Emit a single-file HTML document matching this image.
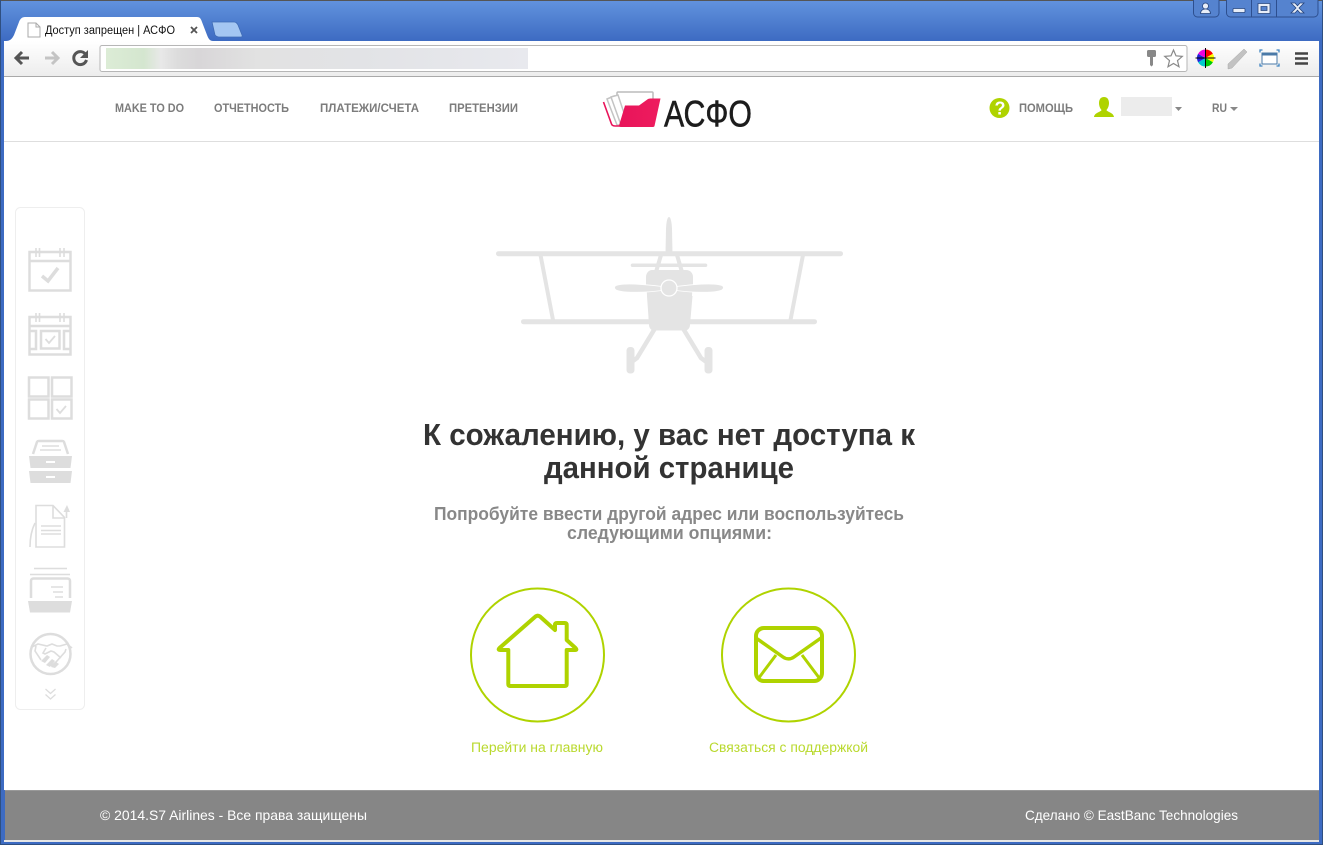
<!DOCTYPE html>
<html lang="ru">
<head>
<meta charset="utf-8">
<title>Доступ запрещен | АСФО</title>
<style>
html,body{margin:0;padding:0;background:#fff;width:1323px;height:845px;overflow:hidden}
svg{display:block;position:absolute;left:0;top:0}
text{font-family:"Liberation Sans","DejaVu Sans",sans-serif}
.nav{font-size:12px;font-weight:bold;fill:#7c7c7c}
.ic{fill:none;stroke:#ddd;stroke-width:2.5}
.ict{fill:none;stroke:#ddd;stroke-width:1.6}
.p{fill:#e4e4e4}
.ps{stroke:#e4e4e4;fill:none;stroke-linecap:round}
</style>
</head>
<body>
<svg width="1323" height="845" viewBox="0 0 1323 845">
<defs>
<linearGradient id="fr" x1="0" y1="0" x2="0" y2="1"><stop offset="0" stop-color="#6293de"/><stop offset="1" stop-color="#3d6bc2"/></linearGradient>
<linearGradient id="tb" x1="0" y1="0" x2="0" y2="1"><stop offset="0" stop-color="#fff"/><stop offset="1" stop-color="#ececec"/></linearGradient>
<linearGradient id="pk" x1="0" y1="0" x2="1" y2="0"><stop offset="0" stop-color="#e8145a"/><stop offset="1" stop-color="#ee1c5e"/></linearGradient>
<linearGradient id="bl" x1="0" y1="0" x2="1" y2="0"><stop offset="0" stop-color="#dcecd6"/><stop offset=".09" stop-color="#d4e6cf"/><stop offset=".13" stop-color="#e8e8e8"/><stop offset=".17" stop-color="#dcdcdc"/><stop offset=".22" stop-color="#d8d6d8"/><stop offset=".36" stop-color="#e2e2e2"/><stop offset=".6" stop-color="#e2e3e6"/><stop offset="1" stop-color="#e8e9ee"/></linearGradient>
</defs>

<!-- window frame -->
<rect width="1323" height="845" fill="#3d6bc2"/>
<rect width="1323" height="41" fill="url(#fr)"/>
<rect width="1323" height="1" fill="#555"/>
<rect x="0" y="0" width="1" height="845" fill="#2f4f80"/>
<rect x="1322" y="0" width="1" height="845" fill="#2f4f80"/>
<rect x="0" y="844" width="1323" height="1" fill="#2f4f80"/>

<!-- window buttons -->
<g fill="none" stroke="#2d4f8f" stroke-width="1">
<path d="M1193.500 0V13a4 4 0 0 0 4 4H1215a4 4 0 0 0 4-4V0" fill="#5583cf"/>
<path d="M1226.500 0V13a4 4 0 0 0 4 4H1314a4 4 0 0 0 4-4V0" fill="#5583cf"/>
<path d="M1251.500 0V17M1276.500 0V17"/>
</g>
<g fill="#e8eef8" stroke="#27457d" stroke-width=".8">
<circle cx="1205.500" cy="6" r="3"/>
<path d="M1200.500 13.500c0-3 2.500-4.500 5-4.500s5 1.500 5 4.500z"/>
<rect x="1233" y="8.500" width="12" height="4" rx="1"/>
<path fill-rule="evenodd" d="M1258 3.500h12v10h-12zM1261 6.500v4h6v-4z"/>
</g>
<path d="M1291 3l5 5-5 5h4l2.500-2.800 2.500 2.800h4l-5-5 5-5h-4l-2.500 2.800-2.500-2.800z" fill="#e8eef8" stroke="#27457d" stroke-width=".8"/>

<!-- inactive tab -->
<path d="M212 22h22c2 0 3 1 4 3l4 10c.5 1.500 0 2-1 2h-22c-2 0-3-1-4-2z" fill="#a4c6f2" stroke="#3f6bb5" stroke-width=".8"/>

<!-- toolbar -->
<rect x="4" y="41" width="1315" height="36" fill="url(#tb)"/>
<rect x="4" y="76" width="1315" height="1" fill="#a9a9a9"/>

<!-- active tab -->
<path d="M4 41h2c4 0 6-2 8-6l5-13c1-3 3-5 6-5h172c3 0 4 2 5 5l5 13c1.500 4 3 6 6 6z" fill="#fff"/>
<path d="M28 23h8l4 4v10H28z" fill="#fff" stroke="#aaa" stroke-width="1"/>
<path d="M36 23v4h4" fill="none" stroke="#aaa"/>
<text x="45" y="34" font-size="11.500" fill="#111" textLength="130" lengthAdjust="spacingAndGlyphs">Доступ запрещен | АСФО</text>
<path d="M191 27l6 6M197 27l-6 6" stroke="#555" stroke-width="1.800"/>

<!-- nav buttons -->
<g fill="none" stroke-width="3">
<path d="M16 58h13" stroke="#555"/><path d="M22 52L16 58l6 6" stroke="#555"/>
<path d="M45 58h13" stroke="#c4c4c4"/><path d="M52 52L58 58l-6 6" stroke="#c4c4c4"/>
<path d="M86 55a6.500 6.500 0 1 0 .5 5" stroke="#555"/>
</g>
<path d="M88 50v8h-8z" fill="#555"/>

<!-- omnibox -->
<rect x="100" y="45.500" width="1087" height="26" rx="2" fill="#fff" stroke="#b6b6b6"/>
<rect x="106" y="48" width="422" height="21" fill="url(#bl)"/>

<!-- key + star -->
<path d="M1148.500 50h6c1 0 1.500.5 1.500 1.500v4c0 1-.5 1.500-1.500 1.500h-1.500v8l-1.500 1.500-1.500-1.500v-8h-1.500c-1 0-1.500-.5-1.500-1.500v-4c0-1 .5-1.500 1.500-1.500z" fill="#888"/>
<path d="M1173.500 50l2.500 5.800 6.300.6-4.800 4.200 1.500 6.200-5.500-3.300-5.500 3.300 1.500-6.200-4.800-4.200 6.300-.6z" fill="#fff" stroke="#8a8a8a" stroke-width="1.200"/>

<!-- color wheel -->
<g transform="translate(1205.500 58)">
<path d="M0 0V-8.500A8.500 8.500 0 0 1 7.400-4.200z" fill="#f00"/>
<path d="M0 0L7.400-4.200A8.500 8.500 0 0 1 7.400 4.200z" fill="#ff0"/>
<path d="M0 0L7.400 4.200A8.500 8.500 0 0 1 0 8.500z" fill="#0c0"/>
<path d="M0 0V8.500A8.500 8.500 0 0 1-7.400 4.200z" fill="#0cc"/>
<path d="M0 0L-7.400 4.200A8.500 8.500 0 0 1-7.400-4.200z" fill="#22d"/>
<path d="M0 0L-7.400-4.200A8.500 8.500 0 0 1 0-8.500z" fill="#e0d"/>
<path d="M0-10V10M-10 0H10" stroke="#000" stroke-width="1"/>
</g>
<path d="M1228 64l16-15 3 3-15 16-4 1z" fill="#c2c2c2" stroke="#aaa" stroke-width=".5"/>
<!-- window icon -->
<rect x="1262" y="53" width="15" height="11" fill="#fff" stroke="#4a7aa8" stroke-width="1"/>
<rect x="1262" y="53" width="15" height="2.500" fill="#4a7aa8"/>
<path d="M1260 52.500v-2.500h2.500M1276.500 50h2.500v2.500M1279 63.500v2.500h-2.500M1262.500 66H1260v-2.500" fill="none" stroke="#3f84c0" stroke-width="1.300"/>
<!-- menu -->
<path d="M1295 53.500h13M1295 58.500h13M1295 63.500h13" stroke="#444" stroke-width="2.500"/>

<!-- page -->
<rect x="4" y="77" width="1315" height="713" fill="#fff"/>
<rect x="4" y="141" width="1315" height="1" fill="#dedede"/>

<!-- header nav -->
<text class="nav" x="115" y="112" textLength="69" lengthAdjust="spacingAndGlyphs">MAKE TO DO</text>
<text class="nav" x="214" y="112" textLength="75" lengthAdjust="spacingAndGlyphs">ОТЧЕТНОСТЬ</text>
<text class="nav" x="320" y="112" textLength="99" lengthAdjust="spacingAndGlyphs">ПЛАТЕЖИ/СЧЕТА</text>
<text class="nav" x="449" y="112" textLength="69" lengthAdjust="spacingAndGlyphs">ПРЕТЕНЗИИ</text>

<!-- logo -->
<path d="M617 98v-5c0-.8.5-1 1-1h34c.5 0 1 .2 1 1v6" fill="none" stroke="#bbb" stroke-width="1.500"/>
<path d="M607 99l7-3 9 29h-6z" fill="#fff" stroke="#c4c4c4" stroke-width="1.500"/>
<path d="M611 97l7-2 10 30h-7z" fill="#fff" stroke="#c4c4c4" stroke-width="1.500"/>
<path d="M603.500 102l8 22c.5 1.500 2 2 4 2h5" fill="none" stroke="#e8145a" stroke-width="1.600"/>
<path d="M625 105.500h14l9-6.500c1-.5 2-.5 3-.5h9.500l-6 27.500c-.2.800-1 1-2 1h-31.500c-1.500 0-2-.5-2-1.500z" fill="url(#pk)"/>
<text x="664" y="126.500" font-size="37" fill="#1c1c1c" stroke="#1c1c1c" stroke-width=".5" textLength="88" lengthAdjust="spacingAndGlyphs">АСФО</text>

<!-- help -->
<circle cx="999.500" cy="108" r="10" fill="#afd300"/>
<text x="994.500" y="114.500" font-size="18" font-weight="bold" fill="#fff">?</text>
<text class="nav" x="1019" y="112" textLength="54" lengthAdjust="spacingAndGlyphs">ПОМОЩЬ</text>
<path d="M1104 97c3.500 0 5 2.800 5 6 0 3-1.200 5.500-2.500 7 .5 2 7 2.500 7.500 7h-20c.5-4.500 7-5 7.500-7-1.300-1.500-2.500-4-2.500-7 0-3.200 1.500-6 5-6z" fill="#afd300"/>
<rect x="1121" y="97" width="51" height="19" fill="#ececec"/>
<path d="M1175 107h7l-3.500 4z" fill="#888"/>
<text class="nav" x="1212" y="112" textLength="15" lengthAdjust="spacingAndGlyphs">RU</text>
<path d="M1230 107h8l-4 4z" fill="#888"/>

<!-- sidebar -->
<rect x="15.500" y="207.500" width="69" height="502" rx="5" fill="#fff" stroke="#eee"/>
<!-- 1 -->
<rect x="29.500" y="252" width="41" height="38.500" class="ic"/>
<path d="M29 261h42" class="ic"/>
<path d="M36 248v9M39.500 248v9M60 248v9M64 248v9" class="ict"/>
<path d="M42 276l6 5 10-13" fill="none" stroke="#ddd" stroke-width="3.500"/>
<!-- 2 -->
<rect x="29.500" y="317" width="41" height="37.500" class="ic"/>
<path d="M29 326h42" class="ic"/>
<path d="M36 313v9M39.500 313v9M60 313v9M64 313v9" class="ict"/>
<path d="M29 331h7v18h-7M71 331h-7v18h7" class="ic"/>
<rect x="41" y="331" width="18.500" height="17.500" class="ic"/>
<path d="M45.500 339l3.500 4 6-7" fill="none" stroke="#ddd" stroke-width="1.800"/>
<!-- 3 -->
<rect x="29" y="377.500" width="19.500" height="19" class="ic"/>
<rect x="52" y="377.500" width="19.500" height="19" class="ic"/>
<rect x="29" y="399.500" width="19.500" height="19" class="ic"/>
<rect x="52" y="399.500" width="19.500" height="19" class="ic"/>
<path d="M56.500 409l3.500 4 6-7" fill="none" stroke="#ddd" stroke-width="1.800"/>
<!-- 4 -->
<path d="M33 454l4-12c.5-1 1-1 2-1h23c1 0 1.500 0 2 1l4 12" class="ic" stroke-width="2"/>
<path d="M42 446h17M40 450h21" class="ict"/>
<path d="M29 456h43l-1.500 12h-40z" fill="#ddd"/>
<path d="M29 471h43l-1.500 12h-40z" fill="#ddd"/>
<rect x="46" y="461" width="9" height="2" fill="#fff"/>
<rect x="46" y="476" width="9" height="2" fill="#fff"/>
<!-- 5 -->
<path d="M36 505.500h17l11.500 12v29.500H36z" class="ict" stroke-width="2"/>
<path d="M53 505.500V518h11.500" class="ict" stroke-width="2"/>
<path d="M41 526h20M41 530.500h20M41 534h20" class="ict"/>
<path d="M30 547c0-10 2-18 5-24" class="ict" stroke-width="2"/>
<path d="M66.500 518v-8" class="ict" stroke-width="2"/>
<path d="M63.500 512l3.500-7 3 7z" fill="#ddd"/>
<!-- 6 -->
<path d="M34 568.500h33M30 574.500h40" class="ict" stroke-width="2"/>
<path d="M31 598v-17c0-1.500 1-2.500 2.500-2.500h34c1.500 0 2.500 1 2.500 2.500v17" class="ic" stroke-width="2"/>
<path d="M51 587h12M53 592h10M55 597h8" class="ict" stroke-width="1.800"/>
<path d="M28 601h44l-2 11.500H30z" fill="#ddd"/>
<!-- 7 -->
<circle cx="50.500" cy="654" r="20" class="ic"/>
<path d="M32 647l6-3 9 2 5-2 5 2h3l7-2 5 4M36 646l-1 5 6 9M66 649l-1 3-9 10-5 4M46 648l-3 5 2 1 6-3 3 1 7 6" class="ict"/>
<path d="M41 661l6-6 3 2-5 6zM46 665l6-6 3 2-5 6zM51 667l5-5 3 2-4 4z" fill="#ddd"/>
<!-- chevrons -->
<path d="M45.500 689l5 4.500 5-4.500M45.500 694.500l5 4.500 5-4.500" fill="none" stroke="#ddd" stroke-width="1.300"/>

<!-- plane -->
<g>
<path d="M669 217c1.800 0 2.800 6 3 12l.5 25h-7l.5-25c.2-6 1.200-12 3-12z" class="p"/>
<path d="M498.500 253.700H840.500" class="ps" stroke-width="5"/>
<path d="M523.500 321.700H814.500" class="ps" stroke-width="5"/>
<path d="M540.500 255L553 320M803 255L790.500 320" class="ps" stroke-width="4" stroke-linecap="butt"/>
<path d="M632.500 265.300H705.500" class="ps" stroke-width="3.500"/>
<path d="M661 255L656 272M677 255L682 272" class="ps" stroke-width="4" stroke-linecap="butt"/>
<path d="M652 270h34c4 0 7 3 7 7v8h-47v-8c0-4 3-7 6-7z" class="p"/>
<path d="M646.500 284h46l-.5 12h-45z" class="p"/>
<path d="M647 296h45.500l-2.500 29c-.2 3-2 5.500-5 5.500h-31c-3 0-4.800-2.500-5-5.500z" class="p"/>
<path d="M616 290c-2-1.500-2-3.500 0-4.500 8-3 30-1 46 1v4c-16 2-38 3-46-.500zM722 290c2-1.500 2-3.500 0-4.500-8-3-30-1-46 1v4c16 2 38 3 46-.500z" class="p" stroke="#fff" stroke-width=".8"/>
<circle cx="669" cy="288" r="8" fill="#e4e4e4" stroke="#fff" stroke-width="1.300"/>
<path d="M654 330L637 358l-4 3M684 330L701 358l4 3" class="ps" stroke-width="4.500" stroke-linecap="butt"/>
<rect x="626.500" y="347" width="8" height="26.500" rx="3.500" class="p"/>
<rect x="704.500" y="347" width="8" height="26.500" rx="3.500" class="p"/>
</g>

<!-- heading -->
<text x="423" y="445" font-size="31" font-weight="bold" fill="#333" textLength="492" lengthAdjust="spacingAndGlyphs">К сожалению, у вас нет доступа к</text>
<text x="544" y="478" font-size="31" font-weight="bold" fill="#333" textLength="250" lengthAdjust="spacingAndGlyphs">данной странице</text>
<text x="434" y="520" font-size="18" font-weight="bold" fill="#888" textLength="470" lengthAdjust="spacingAndGlyphs">Попробуйте ввести другой адрес или воспользуйтесь</text>
<text x="567" y="539" font-size="18" font-weight="bold" fill="#888" textLength="205" lengthAdjust="spacingAndGlyphs">следующими опциями:</text>

<!-- home -->
<circle cx="537.500" cy="655" r="66.500" fill="none" stroke="#afd300" stroke-width="2"/>
<path d="M535.500 616.500Q537.700 614.800 540 616.500L555 630V625Q555 623 557 623H564.700Q566.700 623 566.700 625V640L575.500 648Q577.500 650 575 650H566.700V684Q566.700 686 564.700 686H510.300Q508.300 686 508.300 684V650H500.500Q497.500 650 499.500 648Z" fill="none" stroke="#afd300" stroke-width="4" stroke-linejoin="round"/>
<!-- mail -->
<circle cx="788.500" cy="655" r="66.500" fill="none" stroke="#afd300" stroke-width="2"/>
<rect x="756" y="628" width="66" height="53" rx="8" fill="none" stroke="#afd300" stroke-width="4"/>
<path d="M756 638l27 19c3.500 2.500 7.500 2.500 11 0l27-19" fill="none" stroke="#afd300" stroke-width="3.500"/>
<path d="M776 655L758 679M802 655L820 679" fill="none" stroke="#afd300" stroke-width="3"/>

<text x="471" y="752" font-size="13.500" fill="#b9d92e" textLength="132" lengthAdjust="spacingAndGlyphs">Перейти на главную</text>
<text x="709" y="752" font-size="13.500" fill="#b9d92e" textLength="159" lengthAdjust="spacingAndGlyphs">Связаться с поддержкой</text>

<!-- footer -->
<rect x="5" y="790" width="1314" height="50" fill="#868686"/>
<rect x="5" y="790" width="1314" height="1" fill="#999"/>
<rect x="4" y="840" width="1315" height="2" fill="#e6e6e6"/>
<text x="100" y="820" font-size="14" fill="#fff" textLength="267" lengthAdjust="spacingAndGlyphs">© 2014.S7 Airlines - Все права защищены</text>
<text x="1025" y="820" font-size="14" fill="#fff" textLength="213" lengthAdjust="spacingAndGlyphs">Сделано © EastBanc Technologies</text>
</svg>
</body>
</html>
